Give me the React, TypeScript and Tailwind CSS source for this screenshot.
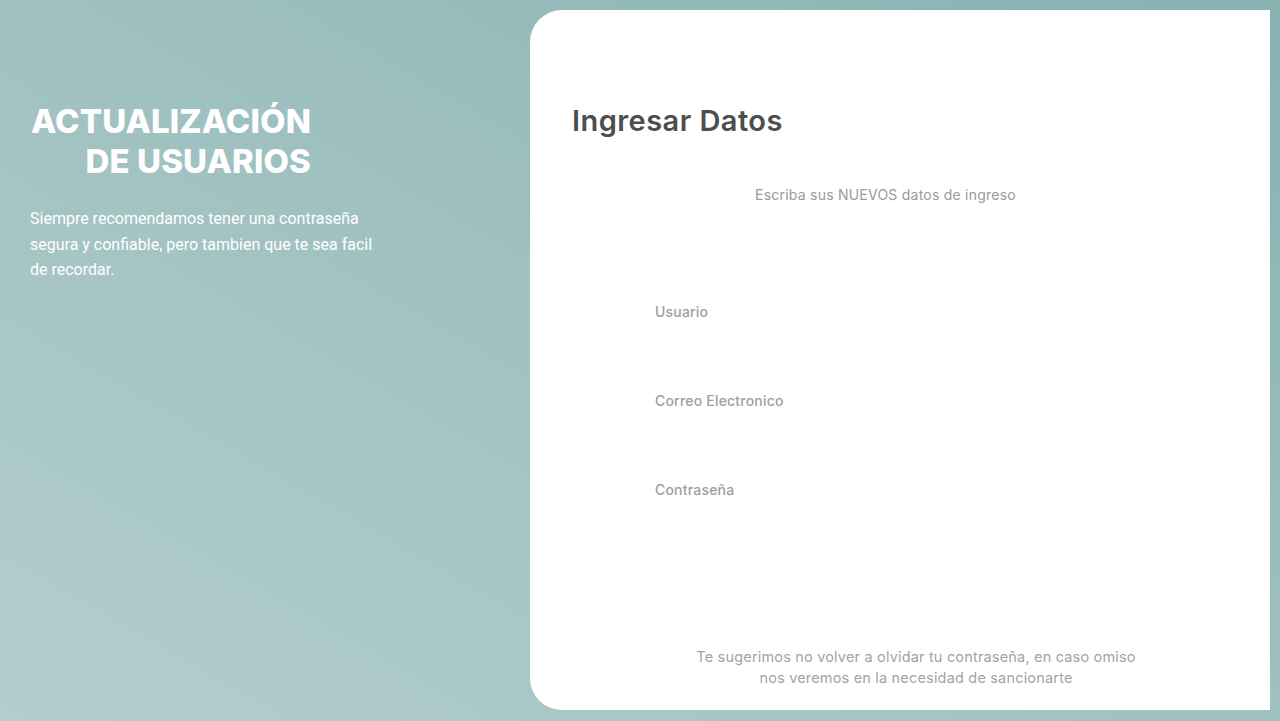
import React from "react";

export default function App() {
  const poppins = { fontFamily: "Inter, 'Noto Sans', sans-serif" } as React.CSSProperties;
  return (
    <div className="flex h-[721px] w-[1280px] overflow-hidden bg-[linear-gradient(30deg,#b3cdcd_0%,#a2c2c2_45%,#88b1b1_100%)]">
      <div className="w-[530px] shrink-0 pl-[30px] pt-[101px]">
        <h1
          className="w-[281px] text-right text-[33px] font-extrabold leading-[40px] tracking-[0.1px] text-white"
          style={poppins}
        >
          ACTUALIZACIÓN
          <br />
          DE USUARIOS
        </h1>
        <p className="mt-[25px] w-[360px] text-[16px] leading-[25.5px] text-white font-['Roboto',sans-serif]">
          Siempre recomendamos tener una contraseña segura y confiable, pero tambien que te sea facil de recordar.
        </p>
      </div>
      <div className="mt-[10px] mb-[11px] mr-[10px] flex flex-1 flex-col rounded-l-[32px] bg-white">
        <h2
          className="ml-[42px] mt-[93px] text-[29px] font-semibold leading-[36px] tracking-[0.45px] text-[#4d4d4d]"
          style={poppins}
        >
          Ingresar Datos
        </h2>
        <p className="mt-[46px] ml-[225px] text-[14px] leading-[20px] tracking-[0.23px] text-[#9a9a9a]" style={poppins}>
          Escriba sus NUEVOS datos de ingreso
        </p>
        <div className="ml-[125px] mt-[97px] flex flex-col gap-[69px] text-[14px] font-medium leading-[20px] tracking-[0.2px] text-[#9e9e9e]" style={poppins}>
          <span>Usuario</span>
          <span>Correo Electronico</span>
          <span>Contraseña</span>
        </div>
        <div className="mt-auto mb-[22px] flex justify-center pl-[32px]">
          <p className="text-center text-[14.5px] leading-[21px] tracking-[0.18px] text-[#a3a3a3]" style={poppins}>
            Te sugerimos no volver a olvidar tu contraseña, en caso omiso
            <br />
            nos veremos en la necesidad de sancionarte
          </p>
        </div>
      </div>
    </div>
  );
}
